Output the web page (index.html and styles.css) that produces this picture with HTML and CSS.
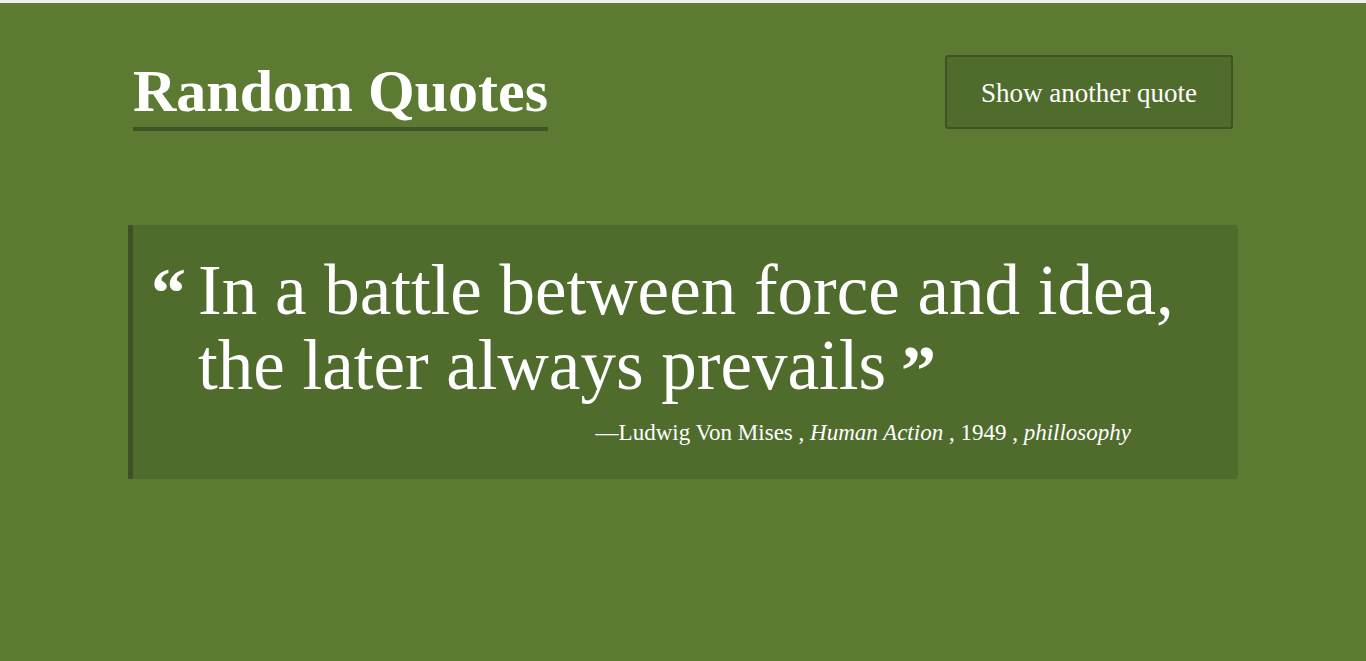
FILE: index.html
```html
<!DOCTYPE html>
<html lang="en">
<head>
<meta charset="utf-8">
<title>Random Quotes</title>
<link rel="stylesheet" href="styles.css">
</head>
<body>
<div class="page">
  <div class="container">
    <header class="header">
      <h1 class="title">Random Quotes</h1>
      <button class="btn" type="button">Show another quote</button>
    </header>
    <blockquote class="card">
      <div class="quote">
        <span class="mark open">&ldquo;</span>
        <p class="text">In a battle between force and idea, the later always prevails<span class="mark close">&rdquo;</span></p>
      </div>
      <footer class="source">&mdash;Ludwig Von Mises , <cite>Human Action</cite> , 1949 , <em>phillosophy</em></footer>
    </blockquote>
  </div>
</div>
</body>
</html>
```
FILE: styles.css
```css
html, body {
  margin: 0;
  padding: 0;
}
body {
  background: #5c7a32;
  color: #ffffff;
  font-family: "Liberation Serif", "Times New Roman", serif;
  border-top: 3px solid #eef0ea;
  min-height: 658px;
}
.container {
  width: 1110px;
  margin: 0 auto;
}
.header {
  display: flex;
  justify-content: space-between;
  align-items: flex-start;
  padding-top: 52px;
}
.title {
  margin: 0 0 0 5px;
  font-size: 60px;
  font-weight: bold;
  line-height: 72px;
  border-bottom: 4px solid #3f5424;
  padding-bottom: 0;
}
.btn {
  margin-right: 5px;
  width: 288px;
  height: 74px;
  background: #506c2d;
  border: 2px solid #3f5424;
  border-radius: 3px;
  color: #fff;
  font-family: inherit;
  font-size: 27px;
  padding: 2px 0 0 0;
}
.card {
  margin: 94px 0 0 0;
  background: #506c2d;
  border-left: 5px solid #3e5224;
  border-radius: 0 4px 4px 0;
  padding: 28px 0 33px 0;
}
.quote {
  display: flex;
  align-items: flex-start;
  padding-left: 18px;
}
.mark {
  font-weight: bold;
  font-size: 70px;
  line-height: 0;
}
.mark.open {
  width: 47px;
  flex: none;
  line-height: 1;
  padding-top: 5px;
}
.mark.close {
  margin-left: 15px;
  vertical-align: -5px;
}
.text {
  margin: 0;
  font-size: 71px;
  line-height: 75px;
  padding-right: 40px;
}
.source {
  text-align: right;
  padding-right: 107px;
  margin-top: 17px;
  font-size: 23px;
}
.source cite, .source em {
  font-style: italic;
}
```
